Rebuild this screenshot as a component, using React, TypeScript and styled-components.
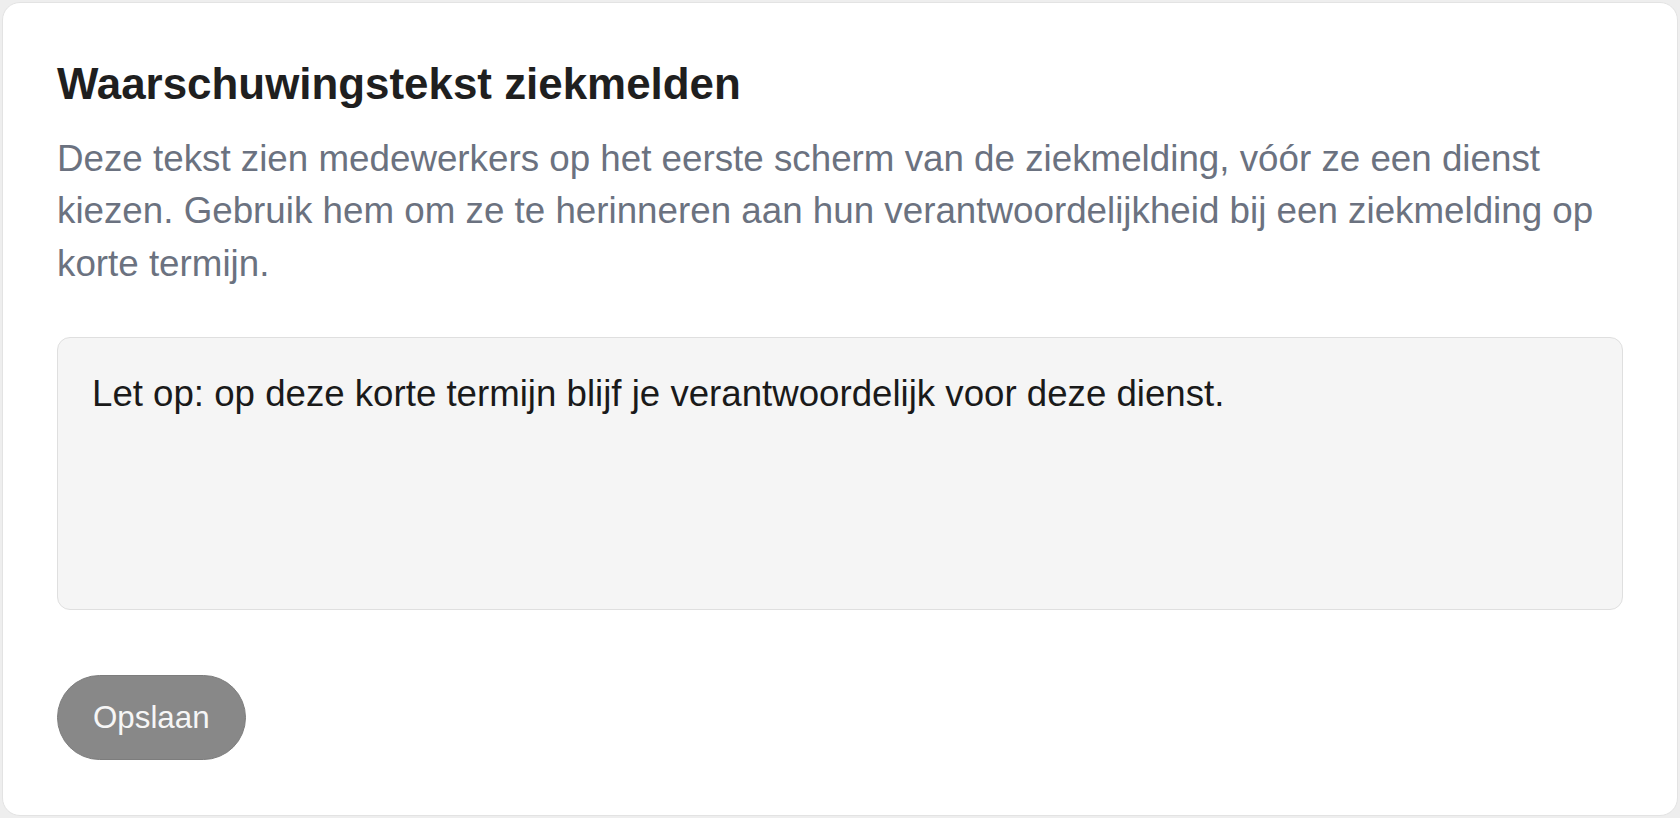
import React from "react";
import styled, { createGlobalStyle } from "styled-components";

const GlobalStyle = createGlobalStyle`
  html, body {
    margin: 0;
    padding: 0;
    background: #eeeeee;
  }
  body {
    font-family: "Liberation Sans", Arial, sans-serif;
  }
  * {
    box-sizing: border-box;
  }
`;

const Page = styled.div`
  padding: 2px;
  min-height: 818px;
`;

const Card = styled.section`
  background: #ffffff;
  border: 1px solid #e3e3e3;
  border-radius: 18px;
  padding: 55px 54px 55px;
  display: flex;
  flex-direction: column;
  align-items: flex-start;
`;

const Title = styled.h2`
  margin: 0;
  font-size: 43.9px;
  line-height: 52.6px;
  font-weight: 700;
  color: #1f1f1f;
`;

const Description = styled.p`
  margin: 22.4px 0 0;
  font-size: 36.75px;
  line-height: 52.5px;
  color: #6b7280;
`;

const MessageField = styled.textarea`
  display: block;
  width: 100%;
  height: 273px;
  margin-top: 46.7px;
  padding: 29px 34px;
  border: 1px solid #dfdfdf;
  border-radius: 13px;
  background: #f5f5f5;
  font-family: inherit;
  font-size: 36.65px;
  line-height: 54.75px;
  color: #1a1a1a;
  resize: none;
  outline: none;
`;

const SaveButton = styled.button`
  margin-top: 65px;
  height: 85px;
  padding: 0 35px;
  border: 1px solid #7d7d7d;
  border-radius: 999px;
  background: #888888;
  color: #f6f6f6;
  font-family: inherit;
  font-size: 31.3px;
  cursor: pointer;
`;

function App() {
  return (
    <Page>
      <GlobalStyle />
      <Card>
        <Title>Waarschuwingstekst ziekmelden</Title>
        <Description>
          Deze tekst zien medewerkers op het eerste scherm van de ziekmelding,
          vóór ze een dienst kiezen. Gebruik hem om ze te herinneren aan hun
          verantwoordelijkheid bij een ziekmelding op korte termijn.
        </Description>
        <MessageField defaultValue="Let op: op deze korte termijn blijf je verantwoordelijk voor deze dienst." />
        <SaveButton type="button">Opslaan</SaveButton>
      </Card>
    </Page>
  );
}

export default App;
